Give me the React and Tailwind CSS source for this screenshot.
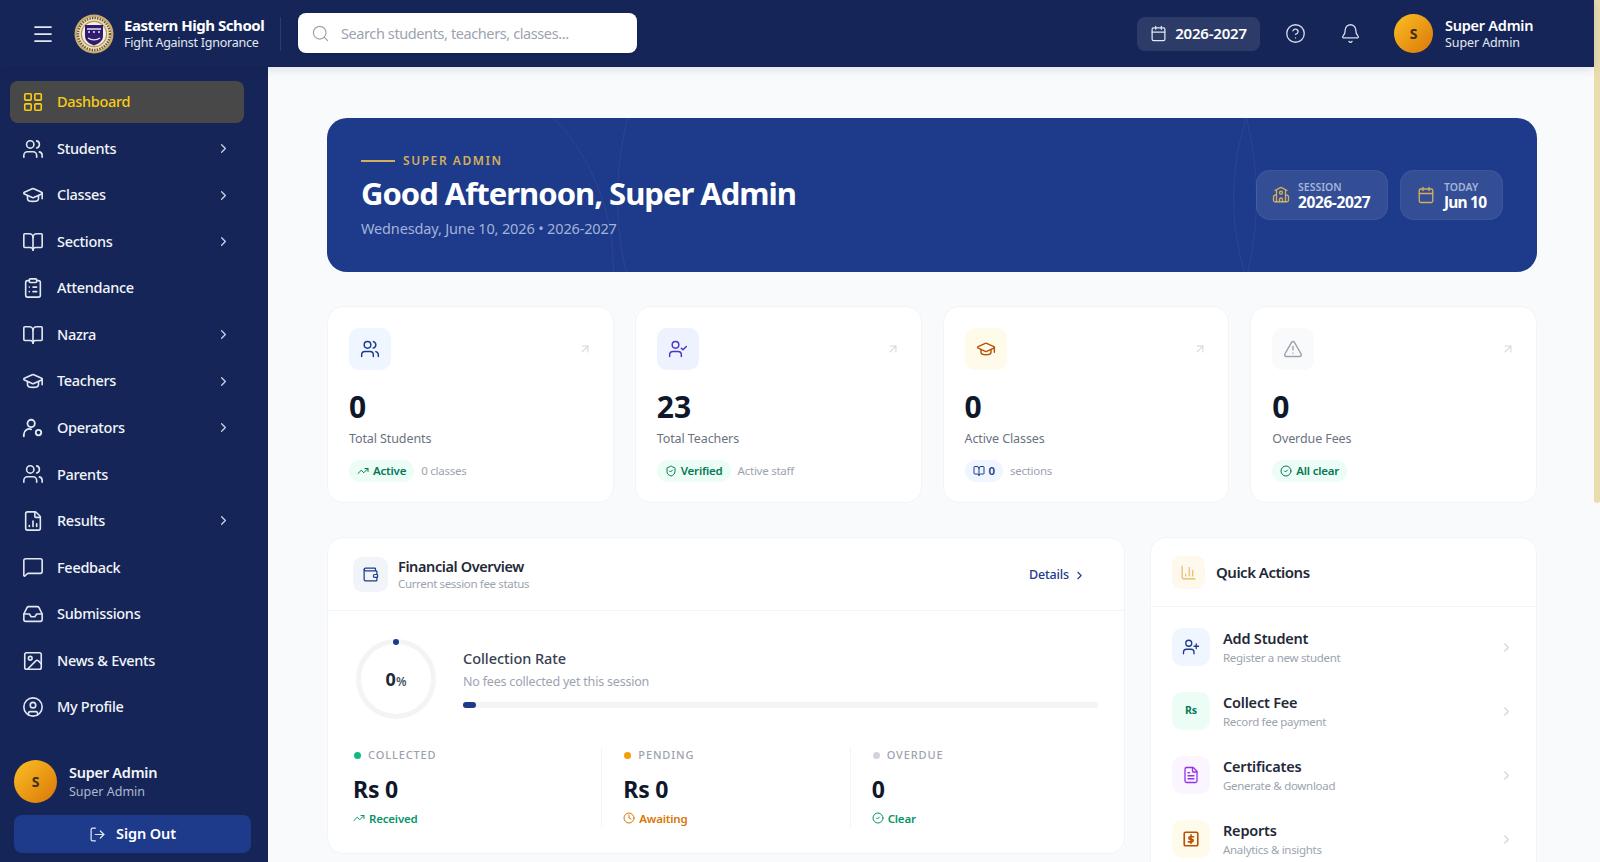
import {
  Menu, Search, Calendar, CircleHelp, Bell, LayoutGrid, Users, GraduationCap, BookOpen, ClipboardList,
  ChevronRight, FileChartColumn, MessageSquare, Inbox, Image, CircleUser, LogOut, School, UserCheck,
  TriangleAlert, ArrowUpRight, TrendingUp, ShieldCheck, CircleCheck, Wallet, ChartColumn, UserPlus,
  FileText, Clock,
} from "lucide-react";

const OperatorIcon = ({ size = 22, className = "" }) => (
  <svg width={size} height={size} viewBox="0 0 24 24" fill="none" stroke="currentColor" strokeWidth="2" strokeLinecap="round" strokeLinejoin="round" className={className}>
    <circle cx="10" cy="7" r="4" />
    <path d="M2 21v-2a6 6 0 0 1 8-5.6" />
    <circle cx="18" cy="17" r="3" />
  </svg>
);

const ReportIcon = ({ size = 18, className = "" }) => (
  <svg width={size} height={size} viewBox="0 0 24 24" fill="none" stroke="currentColor" strokeWidth="2.2" strokeLinecap="round" strokeLinejoin="round" className={className}>
    <rect x="3" y="3" width="18" height="18" rx="1.5" />
    <path d="M12 6.5v11" />
    <path d="M15.5 9h-4.7a1.7 1.7 0 0 0 0 3.4h2.4a1.7 1.7 0 0 1 0 3.4H8.5" />
  </svg>
);

const Logo = () => (
  <svg width="40" height="40" viewBox="0 0 40 40" className="shrink-0">
    <circle cx="20" cy="20" r="19.5" fill="#c9ab6a" />
    <circle cx="20" cy="20" r="17" fill="#e8dfc4" />
    <circle cx="20" cy="20" r="16" fill="none" stroke="#6b5a3a" strokeWidth="2.4" strokeDasharray="1.4 1.2" />
    <circle cx="20" cy="20" r="13.2" fill="#b8934a" />
    <circle cx="20" cy="20" r="12" fill="#f2efe6" />
    <path d="M11 11h18v11c0 5-4.5 8-9 9.5-4.5-1.5-9-4.5-9-9.5z" fill="#2f1c70" />
    <path d="M13 15h14M14 18h2M19 18h2M24 18h2" stroke="#e5e3f2" strokeWidth="1.6" />
    <path d="M14 24c3 2.5 9 2.5 12 0" stroke="#e5e3f2" strokeWidth="1.2" fill="none" />
  </svg>
);

const navItems = [
  { label: "Students", icon: Users, more: true },
  { label: "Classes", icon: GraduationCap, more: true },
  { label: "Sections", icon: BookOpen, more: true },
  { label: "Attendance", icon: ClipboardList },
  { label: "Nazra", icon: BookOpen, more: true },
  { label: "Teachers", icon: GraduationCap, more: true },
  { label: "Operators", icon: OperatorIcon, more: true },
  { label: "Parents", icon: Users },
  { label: "Results", icon: FileChartColumn, more: true },
  { label: "Feedback", icon: MessageSquare },
  { label: "Submissions", icon: Inbox },
  { label: "News & Events", icon: Image },
  { label: "My Profile", icon: CircleUser },
];

const stats = [
  {
    value: "0", label: "Total Students", icon: Users, box: "bg-[#eff6ff]", tint: "text-[#1e3a8a]",
    pill: "Active", pillIcon: TrendingUp, note: "0 classes",
  },
  {
    value: "23", label: "Total Teachers", icon: UserCheck, box: "bg-[#eef2ff]", tint: "text-[#4338ca]",
    pill: "Verified", pillIcon: ShieldCheck, note: "Active staff",
  },
  {
    value: "0", label: "Active Classes", icon: GraduationCap, box: "bg-[#fffbeb]", tint: "text-[#b45309]",
    pill: "0", pillIcon: BookOpen, note: "sections", blue: true,
  },
  {
    value: "0", label: "Overdue Fees", icon: TriangleAlert, box: "bg-[#f9fafb]", tint: "text-[#9ca3af]",
    pill: "All clear", pillIcon: CircleCheck,
  },
];

const finance = [
  { label: "COLLECTED", value: "Rs 0", dot: "bg-[#10b981]", sub: "Received", subIcon: TrendingUp, subColor: "text-[#059669]" },
  { label: "PENDING", value: "Rs 0", dot: "bg-[#f59e0b]", sub: "Awaiting", subIcon: Clock, subColor: "text-[#d97706]" },
  { label: "OVERDUE", value: "0", dot: "bg-[#d1d5db]", sub: "Clear", subIcon: CircleCheck, subColor: "text-[#059669]" },
];

const actions = [
  { title: "Add Student", sub: "Register a new student", box: "bg-[#eff6ff]", tint: "text-[#1e3a8a]", icon: UserPlus },
  { title: "Collect Fee", sub: "Record fee payment", box: "bg-[#ecfdf5]", tint: "text-[#047857]", rs: true },
  { title: "Certificates", sub: "Generate & download", box: "bg-[#faf5ff]", tint: "text-[#9333ea]", icon: FileText },
  { title: "Reports", sub: "Analytics & insights", box: "bg-[#fffbeb]", tint: "text-[#b45309]", icon: ReportIcon },
];

const Avatar = ({ size }) => (
  <div className={`${size} shrink-0 rounded-full bg-gradient-to-br from-[#fbbf24] to-[#d97706] flex items-center justify-center text-[14px] font-bold text-[#3b2f14]`}>
    S
  </div>
);

export default function App() {
  return (
    <div className="flex h-screen w-full overflow-hidden bg-[#f8fafc] font-['Noto_Sans',sans-serif]">
      <div className="flex min-w-0 flex-1 flex-col">
        {/* TOP BAR */}
        <header className="z-10 flex h-[67px] shrink-0 items-center bg-[#162558] pl-[31px] shadow-[0_2px_10px_rgba(15,23,42,0.12)]">
          <Menu size={24} strokeWidth={1.75} className="text-[#e2e8f0]" />
          <div className="ml-[19px]"><Logo /></div>
          <div className="ml-[10px] w-[156px] leading-none">
            <div className="text-[15px] font-bold tracking-[-0.45px] text-white">Eastern High School</div>
            <div className="mt-[4px] text-[12.5px] tracking-[-0.25px] text-[#e2e8f0]">Fight Against Ignorance</div>
          </div>
          <div className="h-[34px] w-px bg-white/10" />
          <div className="mb-[1px] ml-[17px] flex h-[40px] w-[339px] items-center rounded-lg bg-white pl-[13px] shadow-sm">
            <Search size={19} strokeWidth={1.5} className="text-[#9ca3af]" />
            <span className="ml-[11px] pt-[2px] text-[14.5px] tracking-[-0.4px] text-[#9ca3af]">Search students, teachers, classes...</span>
          </div>
          <div className="ml-auto flex h-[34px] w-[123px] items-center justify-center gap-[8px] rounded-lg bg-white/10">
            <Calendar size={17} strokeWidth={1.75} className="text-[#e2e8f0]" />
            <span className="text-[15px] font-semibold tracking-[-0.2px] text-white">2026-2027</span>
          </div>
          <CircleHelp size={21} strokeWidth={1.5} className="ml-[25px] text-[#d5dbe8]" />
          <Bell size={21} strokeWidth={1.5} className="ml-[34px] text-[#d5dbe8]" />
          <div className="ml-[33px] mr-[59px] flex items-center gap-[12px]">
            <Avatar size="h-[39px] w-[39px]" />
            <div className="w-[90px] leading-none">
              <div className="text-[14.5px] font-semibold tracking-[-0.25px] text-white">Super Admin</div>
              <div className="mt-[5px] text-[12.5px] tracking-[-0.1px] text-[#e2e8f0]">Super Admin</div>
            </div>
          </div>
        </header>

        <div className="flex min-h-0 flex-1">
          {/* SIDEBAR */}
          <aside className="flex w-[268px] shrink-0 flex-col justify-between bg-[#162558] pb-[9px] pt-[14px]">
            <nav className="flex flex-col gap-[4.55px] pl-[10px] pr-[24px]">
              <div className="flex h-[42px] items-center rounded-lg bg-[#484848] pl-[12px]">
                <LayoutGrid size={22} strokeWidth={1.75} className="text-[#facc15]" />
                <span className="ml-[13px] text-[14.5px] font-medium tracking-[-0.3px] text-[#facc15]">Dashboard</span>
              </div>
              {navItems.map((item) => (
                <div key={item.label} className="flex h-[42px] items-center pl-[12px] pr-[13px]">
                  <item.icon size={22} strokeWidth={1.75} className="text-[#e2e8f0]" />
                  <span className="ml-[13px] text-[14.5px] font-medium tracking-[-0.3px] text-[#f1f5f9]">{item.label}</span>
                  {item.more && <ChevronRight size={15} strokeWidth={2} className="ml-auto text-[#cbd5e1]" />}
                </div>
              ))}
            </nav>
            <div className="px-[14px]">
              <div className="flex items-center gap-[12px]">
                <Avatar size="h-[43px] w-[43px]" />
                <div className="leading-none">
                  <div className="text-[14.5px] font-semibold tracking-[-0.25px] text-[#f1f5f9]">Super Admin</div>
                  <div className="mt-[6px] text-[12.5px] text-[#aeb8ce]">Super Admin</div>
                </div>
              </div>
              <div className="mt-[12px] flex h-[38px] w-[237px] items-center justify-center gap-[10px] rounded-lg bg-[#1e3a8a]">
                <LogOut size={17} strokeWidth={1.75} className="text-[#e2e8f0]" />
                <span className="text-[14.5px] font-semibold tracking-[-0.1px] text-white">Sign Out</span>
              </div>
            </div>
          </aside>

          {/* MAIN */}
          <main className="min-w-0 flex-1 overflow-hidden pl-[59px] pr-[57px] pt-[51px]">
            {/* HERO */}
            <section className="relative flex h-[154px] items-center justify-between overflow-hidden rounded-[20px] bg-[#1e3a8a] pl-[34px] pr-[34px]">
              <div className="absolute left-[290px] top-[-240px] h-[640px] w-[640px] rounded-full border border-white/5" />
              <div className="absolute left-[-153px] top-[-70px] h-[440px] w-[440px] rounded-full border border-white/5" />
              <div className="absolute left-[906px] top-[-180px] h-[520px] w-[520px] rounded-full border border-white/5" />
              <div className="relative">
                <div className="mt-[2px] flex items-center gap-[8px]">
                  <div className="h-[2px] w-[34px] bg-[#d4af5a]" />
                  <span className="text-[12px] font-semibold leading-none tracking-[0.13em] text-[#d4af5a]">SUPER ADMIN</span>
                </div>
                <h1 className="mt-[7px] text-[31px] font-bold leading-[38px] tracking-[-1px] text-white">Good Afternoon, Super Admin</h1>
                <p className="mt-[6px] text-[14.5px] leading-[20px] tracking-[-0.15px] text-[#a3b3da]">Wednesday, June 10, 2026 • 2026-2027</p>
              </div>
              <div className="relative flex gap-[12px]">
                <div className="flex h-[50px] w-[132px] items-center gap-[8px] rounded-[14px] border border-white/5 bg-white/10 pl-[15px]">
                  <School size={18} strokeWidth={1.75} className="text-[#d4af5a]" />
                  <div className="pt-[2px] leading-none">
                    <div className="text-[10.5px] font-semibold text-[#a3b3da]">SESSION</div>
                    <div className="mt-[3px] text-[15.5px] font-bold tracking-[-0.4px] text-white">2026-2027</div>
                  </div>
                </div>
                <div className="flex h-[50px] w-[103px] items-center gap-[9px] rounded-[14px] border border-white/5 bg-white/10 pl-[16px]">
                  <Calendar size={18} strokeWidth={1.75} className="text-[#d4af5a]" />
                  <div className="pt-[2px] leading-none">
                    <div className="text-[10.5px] font-semibold text-[#a3b3da]">TODAY</div>
                    <div className="mt-[3px] text-[15.5px] font-bold tracking-[-0.8px] text-white">Jun 10</div>
                  </div>
                </div>
              </div>
            </section>

            {/* STAT CARDS */}
            <section className="mt-[34px] grid grid-cols-4 gap-[21px]">
              {stats.map((card) => (
                <div key={card.label} className="h-[197px] rounded-2xl border border-[#f1f5f9] bg-white p-[21px]">
                  <div className="flex items-center justify-between">
                    <div className={`flex h-[42px] w-[42px] items-center justify-center rounded-[10px] ${card.box}`}>
                      <card.icon size={20} strokeWidth={1.75} className={card.tint} />
                    </div>
                    <ArrowUpRight size={14} strokeWidth={1.75} className="text-[#d1d5db]" />
                  </div>
                  <div className="mt-[17px] text-[30px] font-bold leading-[40px] text-[#0f172a]">{card.value}</div>
                  <div className="mt-[3px] text-[12.5px] leading-[18px] tracking-[-0.1px] text-[#6b7280]">{card.label}</div>
                  <div className="mt-[12px] flex items-center gap-[7px]">
                    <span className={`flex h-[22px] items-center gap-[4px] rounded-full px-[8px] text-[11.5px] font-semibold tracking-[-0.2px] ${card.blue ? "bg-[#eff6ff] text-[#1e3a8a]" : "bg-[#ecfdf5] text-[#047857]"}`}>
                      <card.pillIcon size={12} strokeWidth={2} />
                      {card.pill}
                    </span>
                    {card.note && <span className="text-[11.5px] tracking-[-0.25px] text-[#9ca3af]">{card.note}</span>}
                  </div>
                </div>
              ))}
            </section>

            <section className="mt-[34px] grid grid-cols-[798px_1fr] gap-[25px]">
              {/* FINANCIAL OVERVIEW */}
              <div className="h-[317px] rounded-2xl border border-[#f1f5f9] bg-white">
                <div className="flex h-[73px] items-center border-b border-[#f1f5f9] pl-[25px] pr-[38px]">
                  <div className="flex h-[35px] w-[35px] items-center justify-center rounded-[9px] bg-[#f1f5f9]">
                    <Wallet size={17} strokeWidth={1.75} className="text-[#1e3a8a]" />
                  </div>
                  <div className="ml-[10px] leading-none">
                    <div className="text-[14.5px] font-semibold tracking-[-0.4px] text-[#1f2937]">Financial Overview</div>
                    <div className="mt-[5px] text-[11.5px] tracking-[-0.35px] text-[#9ca3af]">Current session fee status</div>
                  </div>
                  <div className="ml-auto mt-[3px] flex items-center gap-[4px] text-[12.5px] font-medium tracking-[-0.15px] text-[#1e3a8a]">
                    Details <ChevronRight size={13} strokeWidth={2} />
                  </div>
                </div>
                <div className="pl-[25px] pr-[26px] pt-[28px]">
                  <div className="flex items-center">
                    <div className="relative ml-[3px] flex h-[80px] w-[80px] shrink-0 items-center justify-center rounded-full border-[5px] border-[#f3f4f6]">
                      <div className="absolute left-1/2 top-[-5px] h-[6px] w-[6px] -translate-x-1/2 rounded-full bg-[#1e3a8a]" />
                      <span className="text-[18px] font-bold text-[#1f2937]">0<span className="text-[12px] font-semibold text-[#4b5563]">%</span></span>
                    </div>
                    <div className="ml-[27px] flex-1">
                      <div className="-mt-[2px] text-[14.5px] font-medium leading-[20px] tracking-[-0.05px] text-[#374151]">Collection Rate</div>
                      <div className="mt-[5px] text-[12.5px] leading-[18px] tracking-[-0.2px] text-[#9ca3af]">No fees collected yet this session</div>
                      <div className="mt-[11px] h-[6px] w-full rounded-full bg-[#f3f4f6]">
                        <div className="h-[6px] w-[13px] rounded-full bg-[#1e3a8a]" />
                      </div>
                    </div>
                  </div>
                  <div className="mt-[28px] grid grid-cols-3">
                    {finance.map((f, i) => (
                      <div key={f.label} className={i > 0 ? "border-l border-[#f3f4f6] pl-[21px]" : ""}>
                        <div className="flex items-center gap-[7px] pl-[1px]">
                          <span className={`h-[7px] w-[7px] rounded-full ${f.dot}`} />
                          <span className="text-[11px] font-medium tracking-[0.08em] text-[#9ca3af]">{f.label}</span>
                        </div>
                        <div className="mt-[10px] text-[23px] font-bold leading-[30px] tracking-[-0.2px] text-[#0f172a]">{f.value}</div>
                        <div className={`mt-[6px] flex items-center gap-[4px] text-[11.5px] font-semibold tracking-[-0.2px] ${f.subColor}`}>
                          <f.subIcon size={12} strokeWidth={2} />
                          {f.sub}
                        </div>
                      </div>
                    ))}
                  </div>
                </div>
              </div>

              {/* QUICK ACTIONS */}
              <div className="h-[340px] rounded-t-2xl border border-[#f1f5f9] bg-white">
                <div className="flex h-[69px] items-center border-b border-[#f1f5f9] pl-[21px]">
                  <div className="flex h-[33px] w-[33px] items-center justify-center rounded-[9px] bg-[#fef9ec]">
                    <ChartColumn size={17} strokeWidth={1.5} className="text-[#e0b65a]" />
                  </div>
                  <span className="ml-[11px] text-[15px] font-semibold tracking-[-0.5px] text-[#1f2937]">Quick Actions</span>
                </div>
                <div className="pl-[21px] pr-[22px] pt-[8px]">
                  {actions.map((a) => (
                    <div key={a.title} className="flex h-[64px] items-center">
                      <div className={`flex h-[38px] w-[38px] items-center justify-center rounded-[10px] ${a.box} ${a.tint}`}>
                        {a.rs ? <span className="text-[10.5px] font-bold">Rs</span> : <a.icon size={18} strokeWidth={1.75} />}
                      </div>
                      <div className="ml-[13px] leading-none">
                        <div className="text-[14.5px] font-semibold tracking-[-0.2px] text-[#1f2937]">{a.title}</div>
                        <div className="mt-[7px] text-[11.5px] tracking-[-0.3px] text-[#9ca3af]">{a.sub}</div>
                      </div>
                      <ChevronRight size={15} strokeWidth={1.75} className="ml-auto text-[#d1d5db]" />
                    </div>
                  ))}
                </div>
              </div>
            </section>
          </main>
        </div>
      </div>

      {/* page scrollbar */}
      <div className="w-[6px] shrink-0 bg-[#f8fafc]">
        <div className="h-[503px] w-full rounded-b-full bg-[#e9dcaf]" />
      </div>
    </div>
  );
}
